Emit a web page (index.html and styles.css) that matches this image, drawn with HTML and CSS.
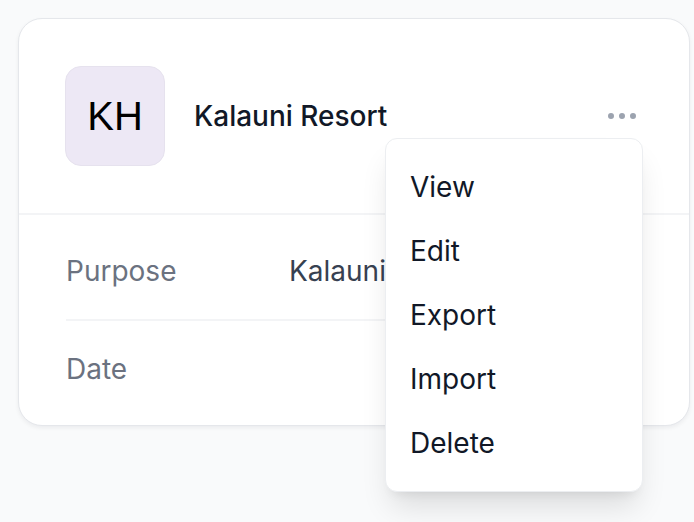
FILE: index.html
```html
<!DOCTYPE html>
<html>
<head>
<meta charset="utf-8">
<link rel="stylesheet" href="styles.css">
</head>
<body>
<div class="card">
  <div class="card-header">
    <div class="avatar">KH</div>
    <div class="name">Kalauni Resort</div>
    <div class="menu-wrap">
      <button class="menu-btn" aria-label="Open options">
        <svg viewBox="0 0 20 20" width="40" height="40" fill="currentColor"><path d="M3 10a1.5 1.5 0 1 1 3 0 1.5 1.5 0 0 1-3 0ZM8.5 10a1.5 1.5 0 1 1 3 0 1.5 1.5 0 0 1-3 0ZM15.5 8.5a1.5 1.5 0 1 0 0 3 1.5 1.5 0 0 0 0-3Z"/></svg>
      </button>
      <div class="menu">
        <a class="menu-item">View</a>
        <a class="menu-item">Edit</a>
        <a class="menu-item">Export</a>
        <a class="menu-item">Import</a>
        <a class="menu-item">Delete</a>
      </div>
    </div>
  </div>
  <dl class="details">
    <div class="row">
      <dt>Purpose</dt>
      <dd>Kalauni</dd>
    </div>
    <div class="row">
      <dt>Date</dt>
      <dd></dd>
    </div>
  </dl>
</div>
</body>
</html>
```
FILE: styles.css
```css
* { box-sizing: border-box; }
html, body { margin: 0; }
body {
  background: #f9fafb;
  padding: 18px 0 0 18px;
  font-family: Inter, "Noto Sans", sans-serif;
  width: 694px;
  height: 522px;
  overflow: hidden;
}
.card {
  width: 672px;
  background: #fff;
  border: 1px solid #e5e7eb;
  border-radius: 24px;
  box-shadow: 0 2px 4px rgba(17, 24, 39, 0.06);
}
.card-header {
  display: flex;
  align-items: center;
  gap: 29px;
  padding: 47px 47px 47px 46px;
  border-bottom: 2px solid #f3f4f6;
}
.avatar {
  width: 100px;
  height: 100px;
  flex: none;
  border-radius: 16px;
  background: #ede8f5;
  border: 1px solid #e6e2ee;
  display: flex;
  align-items: center;
  justify-content: center;
  font-family: "Liberation Sans", Arial, sans-serif;
  font-size: 40px;
  color: #000;
}
.name {
  font-size: 28px;
  line-height: 48px;
  font-weight: 500;
  color: #111827;
}
.menu-wrap {
  position: relative;
  margin-left: auto;
}
.menu-btn {
  display: block;
  background: none;
  border: 0;
  padding: 0;
  margin: 0;
  color: #9ca3af;
  cursor: pointer;
}
.menu-btn svg { display: block; }
.menu {
  position: absolute;
  right: -1px;
  top: 42px;
  width: 258px;
  background: #fff;
  border: 1px solid #eceef1;
  border-radius: 12px;
  padding: 16px 0;
  box-shadow: 0 20px 30px -6px rgba(0, 0, 0, 0.12), 0 8px 12px -8px rgba(0, 0, 0, 0.1);
  display: flex;
  flex-direction: column;
  z-index: 10;
}
.menu-item {
  display: block;
  padding: 8px 24px;
  font-size: 28px;
  line-height: 48px;
  color: #111827;
}
.details {
  margin: 0;
  padding: 8px 47px;
}
.row {
  display: flex;
  padding: 24px 0;
  font-size: 28px;
  line-height: 48px;
}
.row + .row { border-top: 2px solid #f3f4f6; }
.row dt {
  width: 223px;
  flex: none;
  color: #6b7280;
}
.row dd {
  margin: 0;
  color: #374151;
  white-space: nowrap;
}
```
